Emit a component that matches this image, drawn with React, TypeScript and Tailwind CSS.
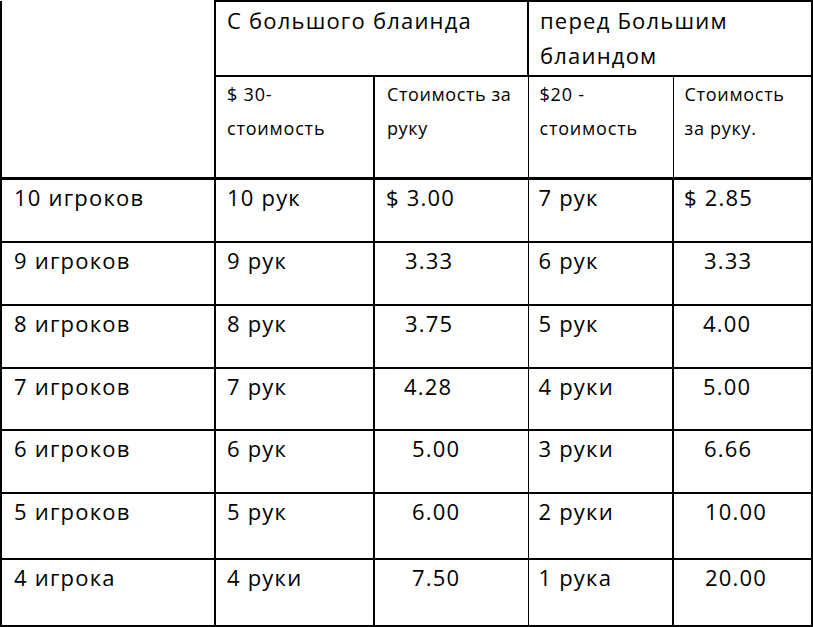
import React from "react";

type Row = {
  players: string;
  hands30: string;
  cost30: string;
  pad30: string;
  hands20: string;
  cost20: string;
  pad20: string;
};

const rows: Row[] = [
  { players: "10 игроков", hands30: "10 рук", cost30: "$ 3.00", pad30: "pl-[11px]", hands20: "7 рук", cost20: "$ 2.85", pad20: "pl-[10px]" },
  { players: "9 игроков", hands30: "9 рук", cost30: "3.33", pad30: "pl-[30px]", hands20: "6 рук", cost20: "3.33", pad20: "pl-[30px]" },
  { players: "8 игроков", hands30: "8 рук", cost30: "3.75", pad30: "pl-[30px]", hands20: "5 рук", cost20: "4.00", pad20: "pl-[29px]" },
  { players: "7 игроков", hands30: "7 рук", cost30: "4.28", pad30: "pl-[29px]", hands20: "4 руки", cost20: "5.00", pad20: "pl-[29px]" },
  { players: "6 игроков", hands30: "6 рук", cost30: "5.00", pad30: "pl-[37px]", hands20: "3 руки", cost20: "6.66", pad20: "pl-[30px]" },
  { players: "5 игроков", hands30: "5 рук", cost30: "6.00", pad30: "pl-[37px]", hands20: "2 руки", cost20: "10.00", pad20: "pl-[31px]" },
  { players: "4 игрока", hands30: "4 руки", cost30: "7.50", pad30: "pl-[37px]", hands20: "1 рука", cost20: "20.00", pad20: "pl-[31px]" },
];

const heights = ["h-[64px]", "h-[63px]", "h-[63px]", "h-[62px]", "h-[63px]", "h-[66px]", "h-[67px]"];

export default function App() {
  return (
    <div className="w-[813px] h-[627px] bg-white overflow-hidden font-['Open_Sans',sans-serif] font-medium text-black">
      <table className="table-fixed border-collapse w-[811px]">
        <colgroup>
          <col className="w-[214px]" />
          <col className="w-[159px]" />
          <col className="w-[154px]" />
          <col className="w-[145px]" />
          <col className="w-[139px]" />
        </colgroup>
        <thead>
          {/* верхняя строка заголовка */}
          <tr className="h-[75px]">
            <th rowSpan={2} className="border-l-2 border-r-2 border-b-[3px] border-black" />
            <th colSpan={2} className="border-2 border-black align-top text-left font-medium pl-[11px] pt-[1px] text-[22px] leading-[35px] tracking-[1.2px]">
              С большого блаинда
            </th>
            <th colSpan={2} className="border-t-2 border-r-[3px] border-l border-b-2 border-black align-top text-left font-medium pl-[11px] pt-[1px] text-[22px] leading-[35px] tracking-[1.2px]">
              перед Большим
              <br />
              блаиндом
            </th>
          </tr>
          <tr className="h-[102px]">
            <th className="border-r-2 border-b-[3px] border-black align-top text-left font-medium pl-[11px] text-[18px] leading-[34px] tracking-[0.8px]">
              $ 30-
              <br />
              стоимость
            </th>
            <th className="border-r border-b-[3px] border-black align-top text-left font-medium pl-[12px] text-[18px] leading-[34px] tracking-[0.6px]">
              Стоимость за
              <br />
              руку
            </th>
            <th className="border-r border-b-[3px] border-black align-top text-left font-medium pl-[11px] text-[18px] leading-[34px] tracking-[0.8px]">
              $20 -
              <br />
              стоимость
            </th>
            <th className="border-r-[3px] border-b-[3px] border-black align-top text-left font-medium pl-[11px] text-[18px] leading-[34px] tracking-[0.7px]">
              Стоимость
              <br />
              за руку.
            </th>
          </tr>
        </thead>
        <tbody className="text-[22px] leading-[35px] tracking-[1.2px]">
          {rows.map((r, i) => (
            <tr key={r.players} className={heights[i]}>
              <td className="border-l-2 border-b-2 border-r-2 border-black align-top pl-[12px]">{r.players}</td>
              <td className="border-b-2 border-r-2 border-black align-top pl-[11px]">{r.hands30}</td>
              <td className={`border-b-2 border-r border-black align-top ${r.pad30}`}>{r.cost30}</td>
              <td className="border-b-2 border-r-2 border-black align-top pl-[10px]">{r.hands20}</td>
              <td className={`border-b-2 border-r-[3px] border-black align-top ${r.pad20}`}>{r.cost20}</td>
            </tr>
          ))}
        </tbody>
      </table>
    </div>
  );
}
